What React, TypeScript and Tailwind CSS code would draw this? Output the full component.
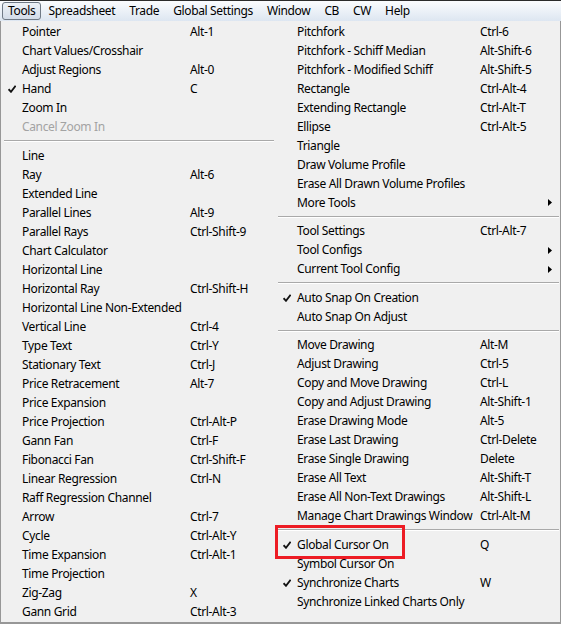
import React from "react";

type Item =
  | { sep: true }
  | { label: string; key?: string; checked?: boolean; disabled?: boolean; sub?: boolean; sep?: false };

const leftItems: Item[] = [
  { label: "Pointer", key: "Alt-1" },
  { label: "Chart Values/Crosshair" },
  { label: "Adjust Regions", key: "Alt-0" },
  { label: "Hand", key: "C", checked: true },
  { label: "Zoom In" },
  { label: "Cancel Zoom In", disabled: true },
  { sep: true },
  { label: "Line" },
  { label: "Ray", key: "Alt-6" },
  { label: "Extended Line" },
  { label: "Parallel Lines", key: "Alt-9" },
  { label: "Parallel Rays", key: "Ctrl-Shift-9" },
  { label: "Chart Calculator" },
  { label: "Horizontal Line" },
  { label: "Horizontal Ray", key: "Ctrl-Shift-H" },
  { label: "Horizontal Line Non-Extended" },
  { label: "Vertical Line", key: "Ctrl-4" },
  { label: "Type Text", key: "Ctrl-Y" },
  { label: "Stationary Text", key: "Ctrl-J" },
  { label: "Price Retracement", key: "Alt-7" },
  { label: "Price Expansion" },
  { label: "Price Projection", key: "Ctrl-Alt-P" },
  { label: "Gann Fan", key: "Ctrl-F" },
  { label: "Fibonacci Fan", key: "Ctrl-Shift-F" },
  { label: "Linear Regression", key: "Ctrl-N" },
  { label: "Raff Regression Channel" },
  { label: "Arrow", key: "Ctrl-7" },
  { label: "Cycle", key: "Ctrl-Alt-Y" },
  { label: "Time Expansion", key: "Ctrl-Alt-1" },
  { label: "Time Projection" },
  { label: "Zig-Zag", key: "X" },
  { label: "Gann Grid", key: "Ctrl-Alt-3" },
];

const rightItems: Item[] = [
  { label: "Pitchfork", key: "Ctrl-6" },
  { label: "Pitchfork - Schiff Median", key: "Alt-Shift-6" },
  { label: "Pitchfork - Modified Schiff", key: "Alt-Shift-5" },
  { label: "Rectangle", key: "Ctrl-Alt-4" },
  { label: "Extending Rectangle", key: "Ctrl-Alt-T" },
  { label: "Ellipse", key: "Ctrl-Alt-5" },
  { label: "Triangle" },
  { label: "Draw Volume Profile" },
  { label: "Erase All Drawn Volume Profiles" },
  { label: "More Tools", sub: true },
  { sep: true },
  { label: "Tool Settings", key: "Ctrl-Alt-7" },
  { label: "Tool Configs", sub: true },
  { label: "Current Tool Config", sub: true },
  { sep: true },
  { label: "Auto Snap On Creation", checked: true },
  { label: "Auto Snap On Adjust" },
  { sep: true },
  { label: "Move Drawing", key: "Alt-M" },
  { label: "Adjust Drawing", key: "Ctrl-5" },
  { label: "Copy and Move Drawing", key: "Ctrl-L" },
  { label: "Copy and Adjust Drawing", key: "Alt-Shift-1" },
  { label: "Erase Drawing Mode", key: "Alt-5" },
  { label: "Erase Last Drawing", key: "Ctrl-Delete" },
  { label: "Erase Single Drawing", key: "Delete" },
  { label: "Erase All Text", key: "Alt-Shift-T" },
  { label: "Erase All Non-Text Drawings", key: "Alt-Shift-L" },
  { label: "Manage Chart Drawings Window", key: "Ctrl-Alt-M" },
  { sep: true },
  { label: "Global Cursor On", key: "Q", checked: true },
  { label: "Symbol Cursor On" },
  { label: "Synchronize Charts", key: "W", checked: true },
  { label: "Synchronize Linked Charts Only" },
];

const menus = ["Spreadsheet", "Trade", "Global Settings", "Window", "CB", "CW", "Help"];

function Check() {
  return (
    <svg width="8" height="8" viewBox="0 0 8 8" className="mt-[1px]">
      <path d="M0.6 4.2 L3 6.8 L7.6 0.8" fill="none" stroke="#111" strokeWidth="1.8" />
    </svg>
  );
}

function Arrow() {
  return (
    <svg width="4" height="7" viewBox="0 0 4 7">
      <path d="M0 0 L4 3.5 L0 7 Z" fill="#000" />
    </svg>
  );
}

function Column({ items, labelW, right }: { items: Item[]; labelW: string; right?: boolean }) {
  return (
    <div className={right ? "flex-1 pl-[3px]" : "w-[274px] pl-[3px]"}>
      {items.map((it, i) =>
        it.sep ? (
          <div key={i} className={`${right ? "h-[9.5px]" : "h-[10px]"} flex items-center pr-[1px]`}>
            <div className="w-full border-t border-[#a9a9a9] border-b border-b-white" />
          </div>
        ) : (
          <div key={i} className={`h-[19px] flex items-center ${right ? "pl-[5px]" : "pl-[4px]"}`}>
            <span className="w-[14px] flex items-center">{it.checked && <Check />}</span>
            <span className={`${labelW} whitespace-nowrap ${it.disabled ? "text-[#a3a3a3]" : "text-black"}`}>
              {it.label}
            </span>
            <span className="flex-1 whitespace-nowrap text-black">{it.key}</span>
            {it.sub && (
              <span className="w-[12px] flex items-center">
                <Arrow />
              </span>
            )}
          </div>
        )
      )}
    </div>
  );
}

export default function App() {
  return (
    <div
      className="relative w-[561px] h-[624px] overflow-hidden bg-[#f0f0f0] text-[12px] leading-none tracking-[-0.35px]"
      style={{ fontFamily: '"Noto Sans", "Open Sans", sans-serif' }}
    >
      {/* menu bar */}
      <div className="h-[21px] border-t border-[#2b2b2b] bg-gradient-to-b from-[#fbfcfe] to-[#dde6f1] flex items-center pl-[2px]">
        <div className="h-[18px] px-[5px] flex items-center rounded-[3px] border border-[#707a86] bg-gradient-to-b from-[#eef2f7] to-[#d3dce8]">
          Tools
        </div>
        {menus.map((m) => (
          <span key={m} className="px-[7px] text-black">
            {m}
          </span>
        ))}
      </div>

      {/* dropdown panel */}
      <div className="h-[603px] flex border-l border-r border-b-2 border-[#979797] pt-[1px] bg-[#f0f0f0]">
        <Column items={leftItems} labelW="w-[168px]" />
        <Column items={rightItems} labelW="w-[183px]" right />
      </div>

      {/* highlight around the global cursor item */}
      <div className="absolute left-[275px] top-[525px] w-[130px] h-[34px] border-[3px] border-[#ed1c24]" />
    </div>
  );
}
